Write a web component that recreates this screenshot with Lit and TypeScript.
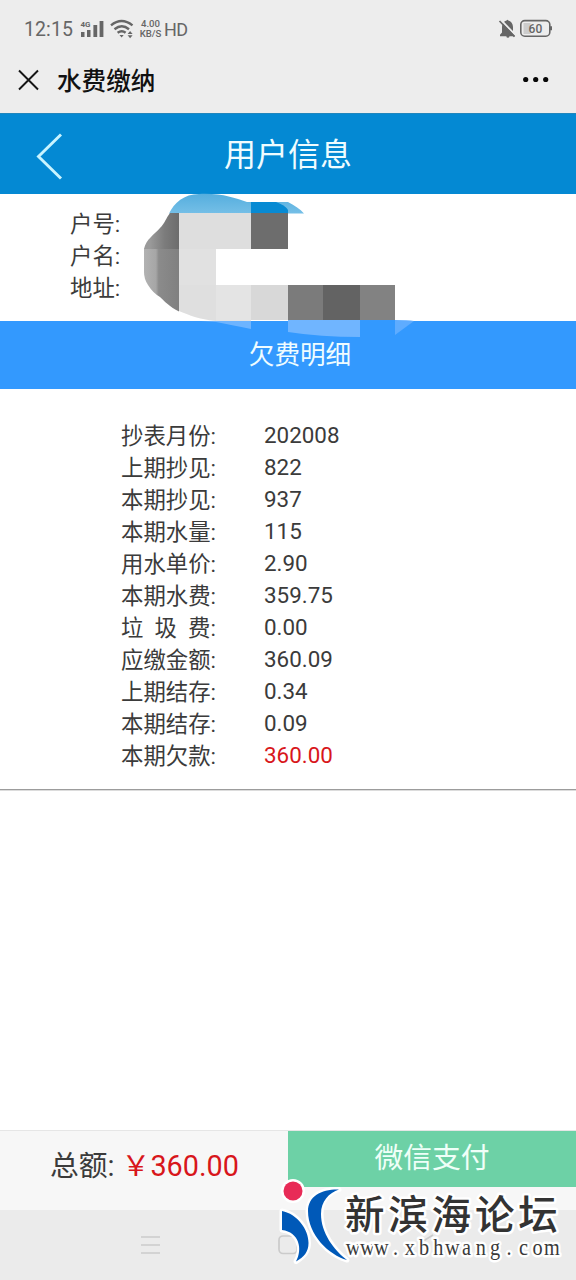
import { LitElement, html, svg, css } from "lit";
import { customElement, property } from "lit/decorators.js";

const sans = css`Roboto, "Noto Sans CJK SC", sans-serif`;

@customElement("phone-status")
class PhoneStatus extends LitElement {
  static styles = css`
    :host { display: block; height: 46px; color: #666; font-family: ${sans}; }
    .bar { display: flex; align-items: center; height: 46px; padding: 13px 0 0 24px; box-sizing: border-box; }
    .time { width: 56px; font-size: 19.5px; line-height: 22px; letter-spacing: 0.1px; }
    .radio { width: 58px; height: 22px; margin-top: -1px; }
    .speed { width: 25px; font-size: 9.6px; line-height: 9.5px; font-weight: 500; text-align: center; margin-top: -2px; white-space: nowrap; }
    .hd { font-size: 18px; line-height: 22px; margin-left: 1px; letter-spacing: -0.5px; }
    .right { margin-left: auto; width: 78px; height: 22px; margin-top: -2px; }
    .lvl { font: 500 12px ${sans}; }
    .net { font: 700 8px ${sans}; }
  `;
  render() {
    return html`<div class="bar">
      <span class="time">12:15</span>
      <svg class="radio" viewBox="80 18 58 22" fill="#666">
        <text class="net" x="80.5" y="27">4G</text>
        <path d="M81 32h3.5v5H81zM87 30h3.5v7H87zM93.4 25h3.8v12h-3.8zM99.6 21h3.8v16h-3.8z" />
        <g fill="none" stroke="#666" stroke-width="2.4">
          <path d="M111 25.4q10.5-8.6 21.5 0" /><path d="M114.5 29.3q7.3-5.9 14.5 0" /><path d="M117.6 32.8q4.3-3 8 0" />
        </g>
        <path d="M119.5 35h4.2l-2.1 2.6zM127.6 34h5l-2.5-3zM127.6 35.2h5l-2.5 3z" />
      </svg>
      <span class="speed">4.00<br />KB/S</span>
      <span class="hd">HD</span>
      <svg class="right" viewBox="498 18 78 22">
        <path fill="#666" d="M500 36.2v-1.4l2-2.2V27c0-3.6 2-6 4.6-6.6q.8-1.3 1.6 0c2.8.6 4.8 3 4.8 6.6v5.6l2 2.2v1.4h-5.500q-.2 1.6-1.6 1.6t-1.6-1.6z" />
        <path d="M500.400 19.5l16 16.5" stroke="#ededed" stroke-width="2" />
        <path d="M499.500 21l15 15.6" stroke="#666" stroke-width="1.7" />
        <rect x="523.5" y="23" width="7" height="11" fill="#ccc" />
        <rect x="520.8" y="20.6" width="29" height="15.6" rx="4" fill="none" stroke="#666" stroke-width="1.6" />
        <path d="M550 26.2h2v4h-2z" fill="#666" />
        <text class="lvl" x="535.4" y="32.8" text-anchor="middle" fill="#666">60</text>
      </svg>
    </div>`;
  }
}

@customElement("bill-row")
class BillRow extends LitElement {
  @property() label = "";
  @property() value = "";
  @property({ type: Boolean }) due = false;
  static styles = css`
    :host { display: block; }
    .row { display: grid; grid-template-columns: 143px 1fr; height: 32px; line-height: 32px; white-space: pre; }
    .label { padding-top: 0.5px; }
    .due { color: #d8161b; }
  `;
  render() {
    return html`<div class="row"><span class="label">${this.label}:</span><span class=${this.due ? "due" : ""}>${this.value}</span></div>`;
  }
}

@customElement("redaction-mark")
class RedactionMark extends LitElement {
  static styles = css`:host { display: block; } svg { display: block; width: 280px; height: 150px; }`;
  render() {
    const cells: [number, number, number, number, string][] = [
      [179, 213, 72, 36, "#dedede"],
      [251, 213, 37, 36, "#6d6d6d"],
      [179, 249, 37, 36, "#e1e1e1"],
      [251, 285, 37, 35, "#d8d8d8"],
      [288, 285, 35, 35, "#7b7b7b"],
      [323, 285, 37, 35, "#636363"],
      [360, 285, 35, 35, "#828282"],
    ];
    return html`<svg viewBox="140 190 280 150">
      <defs>
        <linearGradient id="g" gradientUnits="userSpaceOnUse" x1="150" x2="179" y1="0" y2="0"><stop offset="0" stop-color="#9a9a9a" /><stop offset=".5" stop-color="#7c7c7c" /><stop offset="1" stop-color="#6c6c6c" /></linearGradient>
        <linearGradient id="m" gradientUnits="userSpaceOnUse" x1="144" x2="179" y1="0" y2="0"><stop offset="0" stop-color="#b2b2b2" /><stop offset=".34" stop-color="#a6a6a6" /><stop offset=".42" stop-color="#8b8b8b" /><stop offset="1" stop-color="#808080" /></linearGradient>
        <linearGradient id="s" x1="0" x2="0" y1="0" y2="1"><stop offset="0" stop-color="#55aede" /><stop offset="1" stop-color="#75bfe7" /></linearGradient>
      </defs>
      <path d="M169 213.500C174 203 184 194 199 194C222 193 234 198 247 202L288 202C295 206 300 209 304 213.500Z" fill="url(#s)" />
      <path d="M251 202H276Q285 205 288 210V213.500H251Z" fill="#078ad3" />
      <path d="M170 213H179V249H144C146 239 154 235 160 228C165 223 166 218 170 213Z" fill="url(#g)" />
      <path d="M144 249H179V285H148Q144 279 144 272Z" fill="url(#m)" />
      <path d="M148 285H179V311.500C170 307 164 301 160 297Q153 293 148 285Z" fill="url(#m)" />
      <path d="M179 285H216V321C202 320 188 315 179 311Z" fill="#dfdfdf" />
      <path d="M216 285H251V321H216Z" fill="#e4e4e4" />
      <path d="M201 321H251V329Q231 325 216 322Z" fill="#6db4ff" />
      <path d="M288 320H360V337Q320 337 288 332Z" fill="#70b5ff" />
      <path d="M360 320H395V321H360Z" fill="#3599fd" />
      <path d="M395 320Q408 320 414 321L395 335Z" fill="#5eacff" />
      ${cells.map(([x, y, w, h, c]) => svg`<rect x=${x} y=${y} width=${w} height=${h} fill=${c} />`)}
    </svg>`;
  }
}

@customElement("forum-mark")
class ForumMark extends LitElement {
  static styles = css`
    :host { display: block; }
    svg { display: block; width: 300px; height: 100px; }
    .name { font: 500 39.500px "Noto Sans CJK SC", sans-serif; }
    .url { font: 23px "Liberation Serif", serif; }
    .halo { stroke: #fff; stroke-width: 5px; paint-order: stroke; stroke-linejoin: round; }
  `;
  render() {
    const address = "www.xbhwang.com";
    const xs = [...address].map((_, i) => ((353 + i * 14.2) / 0.88).toFixed(1)).join(" ");
    return html`<svg viewBox="276 1175 300 100">
      <circle class="halo" cx="293" cy="1191" r="9.500" fill="#e82b57" />
      <path class="halo" fill="#0059b8" d="M282 1211C297 1214 308.500 1229 308.500 1243C308.500 1252 304 1257 296 1261.500C303 1249 299 1232 282 1230Z" />
      <path class="halo" fill="#0059b8" d="M339 1189.500C322 1189 308 1196 308 1211C308 1235 329 1255 347 1260C334 1250 321 1233 321 1214C321 1201 329 1193 339 1189.500Z" />
      <text class="name halo" x="345 388.300 431.600 474.900 518.200" y="1228.500" fill="#333">新滨海论坛</text>
      <text class="url halo" transform="scale(.88 1)" x=${xs} y="1255.500" text-anchor="middle" fill="#3a3a3a">${address}</text>
    </svg>`;
  }
}

@customElement("app-root")
class AppRoot extends LitElement {
  static styles = css`
    :host { display: block; height: 1280px; font-family: ${sans}; font-size: 22.4px; color: #3b3b3b; background: #fff; }
    .page { position: relative; display: flex; flex-direction: column; height: 1280px; overflow: hidden; }
    .chrome { height: 113px; background: #ededed; }
    .nav { display: flex; align-items: center; height: 67px; padding: 0 26px 0 17px; }
    .close { width: 22px; height: 22px; margin-right: 18px; }
    .site { font-size: 24.6px; font-weight: 500; color: #111; line-height: 34px; padding-top: 4px; }
    .more { width: 28px; height: 8px; margin-left: auto; }
    .head { display: grid; grid-template-columns: 96px 1fr 96px; height: 81px; background: #0489d3; border-top: 1px solid #2086bd; box-sizing: border-box; color: #effcff; }
    .back { width: 32px; height: 50px; margin: 17px 0 0 34px; }
    .title { font-size: 32px; line-height: 82px; text-align: center; height: 80px; }
    .user { height: 127px; padding: 14px 0 0 70px; box-sizing: border-box; line-height: 32px; }
    .section { height: 68px; padding: 0 0 0 24px; line-height: 69px; background: #3399fe; color: #effcff; font-size: 25.6px; text-align: center; box-sizing: border-box; }
    .bill { height: 401px; padding: 30px 0 0 121px; box-sizing: border-box; border-bottom: 1px solid #9c9c9c; box-shadow: 0 1px 0 #dcdcdc; }
    .space { flex: 1; }
    .pay { display: grid; grid-template-columns: 1fr 1fr; height: 80px; background: #f7f7f7; border-top: 1px solid #e6e6e6; box-sizing: border-box; font-size: 28.8px; }
    .sum { display: flex; padding-left: 50px; line-height: 70px; white-space: nowrap; }
    .caption { padding-top: 0; }
    .money { color: #d8161b; }
    .yen { display: inline-block; margin-left: 7px; font-size: 28.8px; }
    .button { height: 56px; line-height: 55px; text-align: center; background: #6dd1a6; color: #effff8; }
    .keys { display: flex; height: 70px; background: #ebebeb; }
    .keys svg { width: 576px; height: 70px; }
    .mask { position: absolute; left: 140px; top: 190px; }
    .brand { position: absolute; left: 276px; top: 1175px; }
  `;
  render() {
    const rows = [
      ["抄表月份", "202008"], ["上期抄见", "822"], ["本期抄见", "937"], ["本期水量", "115"],
      ["用水单价", "2.90"], ["本期水费", "359.75"], ["垃\u00a0\u00a0圾\u00a0\u00a0费", "0.00"],
      ["应缴金额", "360.09"], ["上期结存", "0.34"], ["本期结存", "0.09"], ["本期欠款", "360.00"],
    ];
    return html`<div class="page">
      <div class="chrome">
        <phone-status></phone-status>
        <div class="nav">
          <svg class="close" viewBox="0 0 22 22"><path d="M2 1.500L21 20.500M21 1.500L2 20.500" stroke="#151515" stroke-width="1.9" /></svg>
          <span class="site">水费缴纳</span>
          <svg class="more" viewBox="0 0 28 8" fill="#080808"><circle cx="3.7" cy="3.500" r="2.600" /><circle cx="13.7" cy="3.500" r="2.600" /><circle cx="23.7" cy="3.500" r="2.600" /></svg>
        </div>
      </div>
      <div class="head">
        <svg class="back" viewBox="34 131 32 50"><path d="M61 134.500L38.500 156.500L61 178.500" fill="none" stroke="#c9f4ff" stroke-width="2.900" /></svg>
        <span class="title">用户信息</span>
      </div>
      <div class="user"><div>户号:</div><div>户名:</div><div>地址:</div></div>
      <div class="section">欠费明细</div>
      <div class="bill">${rows.map(([l, v], i) => html`<bill-row .label=${l} .value=${v} .due=${i === rows.length - 1}></bill-row>`)}</div>
      <div class="space"></div>
      <div class="pay">
        <div class="sum"><span class="caption">总额:</span><span class="money"><span class="yen">￥</span>360.00</span></div>
        <div class="button">微信支付</div>
      </div>
      <div class="keys">
        <svg viewBox="0 1210 576 70" fill="none" stroke="#cbcbcb" stroke-width="1.700">
          <path d="M141 1237H160M141 1245H160M141 1253H160" />
          <rect x="279" y="1236" width="18" height="17.500" rx="4" />
          <path d="M433 1235L420 1243" />
        </svg>
      </div>
      <redaction-mark class="mask"></redaction-mark>
      <forum-mark class="brand"></forum-mark>
    </div>`;
  }
}
